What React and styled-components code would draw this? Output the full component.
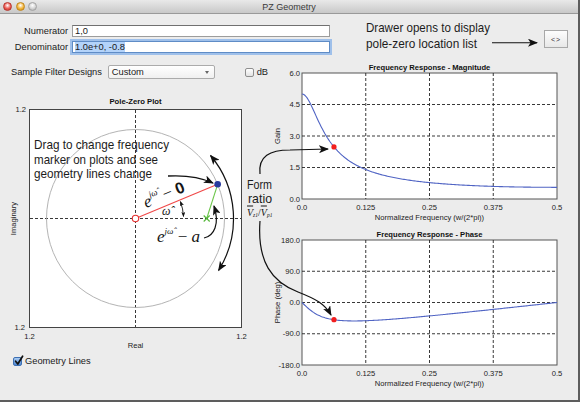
import styled, { createGlobalStyle, css } from 'styled-components';

const GlobalStyle = createGlobalStyle`
  html, body { margin: 0; padding: 0; background: #fff; }
  body { font-family: "Liberation Sans", Arial, sans-serif; }
`;

const Window = styled.div`
  position: relative;
  width: 580px;
  height: 402px;
  box-sizing: border-box;
  display: flex;
  flex-direction: column;
  overflow: hidden;
  background: #ececec;
  border-right: 2px solid #5d5d5d;
  border-bottom: 2px solid #5d5d5d;
  font-family: "Liberation Sans", Arial, sans-serif;
  font-size: 9.3px;
  color: #1a1a1a;
`;

const TitleBar = styled.div`
  flex: none;
  height: 13px;
  display: grid;
  grid-template-columns: 1fr auto 1fr;
  align-items: center;
  background: linear-gradient(#e9e9e9, #c8c8c8);
  border-bottom: 1px solid #999;
`;

const Lights = styled.div`
  display: flex;
  gap: 3.5px;
  padding-left: 3px;
`;

const Light = styled.span`
  width: 9px;
  height: 9px;
  border-radius: 50%;
  box-sizing: border-box;
  border: 1px solid ${p => p.edge};
  background: radial-gradient(circle at 50% 35%, #fff 0, ${p => p.tone} 55%, ${p => p.edge} 100%);
`;

const WindowTitle = styled.div`
  font-size: 9px;
  color: #3a3a3a;
`;

const Header = styled.div`
  flex: none;
  height: 48px;
  display: flex;
  align-items: flex-start;
`;

const FieldGrid = styled.div`
  display: grid;
  grid-template-columns: 68px 258px;
  column-gap: 4px;
  row-gap: 4px;
  align-items: center;
  padding-top: 11px;
`;

const FieldLabel = styled.span`
  text-align: right;
  line-height: 12px;
`;

const TextField = styled.div`
  height: 12px;
  box-sizing: border-box;
  padding: 0 2px;
  background: #fff;
  border: 1px solid #9c9c9c;
  border-top-color: #707070;
  line-height: 10px;
  white-space: nowrap;
  ${p => p.focused && css`
    border-color: #5f8cc6;
    box-shadow: 0 0 0 2px #9fc0ea;
  `}
`;

const Selection = styled.span`
  background: #b3d3fa;
`;

const DrawerButton = styled.div`
  margin: 16px 10px 0 auto;
  width: 24px;
  height: 18px;
  box-sizing: border-box;
  display: flex;
  align-items: center;
  justify-content: center;
  border: 1px solid #a8a8a8;
  background: linear-gradient(#fdfdfd, #e8e8e8);
  font-size: 7px;
  letter-spacing: 1px;
  color: #333;
`;

const Main = styled.div`
  flex: 1;
  display: flex;
`;

const LeftColumn = styled.div`
  width: 268px;
  display: flex;
  flex-direction: column;
`;

const RightColumn = styled.div`
  width: 310px;
  display: flex;
  flex-direction: column;
`;

const ControlRow = styled.div`
  height: ${p => p.h}px;
  display: flex;
  align-items: center;
  padding-left: ${p => p.indent}px;
`;

const FilterLabel = styled.span`
  width: 97px;
`;

const Select = styled.div`
  width: 107px;
  height: 14px;
  box-sizing: border-box;
  display: flex;
  align-items: center;
  justify-content: space-between;
  padding: 0 5px 0 3px;
  border: 1px solid #ababab;
  border-radius: 2px;
  background: linear-gradient(#fff, #f0f0f0);
`;

const Caret = styled.span`
  width: 0;
  height: 0;
  border-left: 2.5px solid transparent;
  border-right: 2.5px solid transparent;
  border-top: 3px solid #666;
`;

const Box = styled.span`
  position: relative;
  flex: none;
  width: 9px;
  height: 9px;
  box-sizing: border-box;
  margin-left: ${p => p.gap || 0}px;
  margin-right: 3px;
  border-radius: 2px;
  border: 1px solid ${p => (p.checked ? '#3d6fb2' : '#8e8e8e')};
  background: ${p => (p.checked ? 'linear-gradient(#a9cbf2, #4d86d2)' : 'linear-gradient(#fff, #e2e2e2)')};
`;

const Tick = styled.svg`
  position: absolute;
  left: 0;
  top: -3px;
  overflow: visible;
`;

const Chart = styled.svg`
  display: block;
  flex: none;
  font-family: "Liberation Sans", Arial, sans-serif;
`;

const Overlay = styled.svg`
  position: absolute;
  left: 0;
  top: 0;
  pointer-events: none;
`;

const Callout = styled.text`
  font-family: "Liberation Sans Narrow", "Liberation Sans", Arial, sans-serif;
  font-size: ${p => p.size || 13.5}px;
  fill: #1c1c1c;
`;

const MathText = styled.text`
  font-family: "Liberation Serif", "DejaVu Serif", serif;
  font-style: italic;
  font-size: ${p => p.size || 17}px;
  fill: #151515;
`;

const PLOT_L = 302;
const PLOT_R = 557;
const MARK_F = 0.0627;
const freqX = f => PLOT_L + ((PLOT_R - PLOT_L) * f) / 0.5;

function response(f) {
  const w = 2 * Math.PI * f;
  const re = 1 - 0.8 * Math.cos(w);
  const im = 0.8 * Math.sin(w);
  return { mag: 1 / Math.hypot(re, im), phase: (-Math.atan2(im, re) * 180) / Math.PI };
}

const X_TICKS = [['0.0', 0], ['0.125', 0.125], ['0.25', 0.25], ['0.375', 0.375], ['0.5', 0.5]];

function ResponsePlot({ box, title, yLabel, top, bottom, min, max, ticks, pick }) {
  const yOf = v => bottom - ((v - min) / (max - min)) * (bottom - top);
  const pts = [];
  for (let i = 0; i <= 200; i++) {
    const f = (i * 0.5) / 200;
    pts.push(`${freqX(f).toFixed(2)},${yOf(pick(response(f))).toFixed(2)}`);
  }
  const mid = (top + bottom) / 2;
  return (
    <Chart width={box[2]} height={box[3]} viewBox={box.join(' ')}>
      <text x={429.5} y={top - 3} fontSize="7.6" fontWeight="bold" textAnchor="middle" fill="#111">{title}</text>
      <rect x={PLOT_L} y={top} width={PLOT_R - PLOT_L} height={bottom - top} fill="#fff" stroke="#555" />
      <g stroke="#222" strokeWidth="0.9" strokeDasharray="3 2">
        {[0.125, 0.25, 0.375].map(f => (
          <line key={f} x1={freqX(f)} x2={freqX(f)} y1={top} y2={bottom} />
        ))}
        {ticks.slice(1, -1).map(t => (
          <line key={t} x1={PLOT_L} x2={PLOT_R} y1={yOf(t)} y2={yOf(t)} />
        ))}
      </g>
      <polyline points={pts.join(' ')} fill="none" stroke="#5064c4" strokeWidth="1.1" />
      <circle cx={freqX(MARK_F)} cy={yOf(pick(response(MARK_F)))} r="2.6" fill="#f21e1e" />
      <g fontSize="7.6" fill="#222">
        {ticks.map(t => (
          <text key={t} x={300} y={yOf(t) + 2.7} textAnchor="end">{t.toFixed(1)}</text>
        ))}
        {X_TICKS.map(([label, f]) => (
          <text key={label} x={freqX(f)} y={bottom + 11} textAnchor="middle">{label}</text>
        ))}
        <text x={429.5} y={bottom + 20.5} textAnchor="middle">Normalized Frequency (w/(2*pi))</text>
        <text transform={`translate(280 ${mid}) rotate(-90)`} textAnchor="middle">{yLabel}</text>
      </g>
    </Chart>
  );
}

const CX = 135.5;
const CY = 218.5;
const R = 89;
const W = (22.6 * Math.PI) / 180;
const DOT = [CX + R * Math.cos(W), CY - R * Math.sin(W)];
const ZX = CX + 0.8 * R;

function PoleZeroPlot() {
  return (
    <Chart width={268} height={270} viewBox="0 82 268 270">
      <text x={CX} y={104} fontSize="7.7" fontWeight="bold" textAnchor="middle" fill="#111">Pole-Zero Plot</text>
      <rect x={29.5} y={109.5} width={212} height={218} fill="#fff" stroke="#444" />
      <g stroke="#222" strokeWidth="0.9" strokeDasharray="3 2">
        <line x1={30} x2={241} y1={CY} y2={CY} />
        <line x1={CX} x2={CX} y1={110} y2={327} />
      </g>
      <circle cx={CX} cy={CY} r={R} fill="none" stroke="#b4b4b4" />
      <line x1={CX} y1={CY} x2={DOT[0]} y2={DOT[1]} stroke="#f04848" strokeWidth="1.1" />
      <line x1={ZX} y1={CY} x2={DOT[0]} y2={DOT[1]} stroke="#6cc64a" strokeWidth="1.1" />
      <circle cx={CX} cy={CY} r="3.2" fill="#fff" stroke="#e53030" strokeWidth="1.1" />
      <path d={`M${ZX - 3} ${CY - 3} L${ZX + 3} ${CY + 3} M${ZX - 3} ${CY + 3} L${ZX + 3} ${CY - 3}`} stroke="#55b83a" strokeWidth="1.1" />
      <circle cx={DOT[0]} cy={DOT[1]} r="3.3" fill="#27399e" />
      <g fontSize="7.6" fill="#222">
        <text x={26} y={112} textAnchor="end">1.2</text>
        <text x={25} y={330} textAnchor="end">1.2</text>
        <text x={29.5} y={339} textAnchor="middle">1.2</text>
        <text x={241.5} y={339} textAnchor="middle">1.2</text>
        <text x={CX} y={348} textAnchor="middle">Real</text>
        <text transform={`translate(16 ${CY}) rotate(-90)`} textAnchor="middle">Imaginary</text>
      </g>
    </Chart>
  );
}

function Annotations() {
  const arc = r => {
    const a0 = (-32 * Math.PI) / 180;
    const a1 = (40 * Math.PI) / 180;
    return `M${CX + r * Math.cos(a0)} ${CY - r * Math.sin(a0)} A${r} ${r} 0 0 0 ${CX + r * Math.cos(a1)} ${CY - r * Math.sin(a1)}`;
  };
  const small = `M${CX + 48} ${CY - 2} A48 48 0 0 0 ${CX + 48 * Math.cos(0.36)} ${CY - 48 * Math.sin(0.36)}`;
  return (
    <Overlay width={580} height={402} viewBox="0 0 580 402">
      <defs>
        <marker id="barb" viewBox="0 0 10 8" refX="9" refY="4" markerWidth="10" markerHeight="8" markerUnits="userSpaceOnUse" orient="auto-start-reverse">
          <path d="M0 0 L10 4 L0 8 L2.5 4 Z" fill="#111" />
        </marker>
        <marker id="barbSmall" viewBox="0 0 10 8" refX="9" refY="4" markerWidth="5" markerHeight="4" markerUnits="userSpaceOnUse" orient="auto-start-reverse">
          <path d="M0 0 L10 4 L0 8 L2.5 4 Z" fill="#111" />
        </marker>
      </defs>

      <Callout x={366} y={32.3} textLength="124" lengthAdjust="spacingAndGlyphs">Drawer opens to display</Callout>
      <Callout x={366} y={48.3} textLength="111" lengthAdjust="spacingAndGlyphs">pole-zero location list</Callout>
      <path d="M492 42.7 H537" stroke="#111" strokeWidth="1.1" markerEnd="url(#barb)" />

      <Callout x={34} y={149} textLength="135" lengthAdjust="spacingAndGlyphs">Drag to change frequency</Callout>
      <Callout x={34} y={163.5} textLength="124" lengthAdjust="spacingAndGlyphs">marker on plots and see</Callout>
      <Callout x={34} y={178} textLength="118" lengthAdjust="spacingAndGlyphs">geometry lines change</Callout>
      <path d="M168 176 C186 175 200 177 213 183" fill="none" stroke="#111" strokeWidth="1.3" markerEnd="url(#barb)" />

      <path d={arc(98)} fill="none" stroke="#111" strokeWidth="1.2" markerStart="url(#barb)" markerEnd="url(#barb)" />
      <path d={small} fill="none" stroke="#111" strokeWidth="0.9" markerStart="url(#barbSmall)" markerEnd="url(#barbSmall)" />

      <MathText transform="translate(146 208) rotate(-22.6)">
        e<tspan fontSize="9" dy="-8">j{'\u03C9\u0302'}</tspan>
        <tspan dy="8" fontStyle="normal"> − </tspan>
        <tspan fontStyle="normal" fontWeight="bold" fontFamily="Liberation Sans, Arial, sans-serif" fontSize="16">0</tspan>
      </MathText>
      <MathText x={162} y={215} size={12}>{'\u03C9\u0302'}</MathText>
      <MathText x={157} y={242}>
        e<tspan fontSize="9" dy="-8">j{'\u03C9\u0302'}</tspan>
        <tspan dy="8" fontStyle="normal"> − </tspan>a
      </MathText>
      <path d="M204 238 C214 236 220 224 214 206" fill="none" stroke="#111" strokeWidth="1.2" markerEnd="url(#barb)" />

      <Callout x={247} y={189} size={13} textLength="25" lengthAdjust="spacingAndGlyphs">Form</Callout>
      <Callout x={248} y={203} size={13} textLength="24" lengthAdjust="spacingAndGlyphs">ratio</Callout>
      <MathText x={247} y={215.5} size={10}>
        <tspan textDecoration="overline">V</tspan>
        <tspan fontSize="5.5" dy="1.3">z1</tspan>
        <tspan dy="-1.3" fontStyle="normal">/</tspan>
        <tspan textDecoration="overline">V</tspan>
        <tspan fontSize="5.5" dy="1.3">p1</tspan>
      </MathText>
      <path d="M260 174 C258 156 270 150 290 150 L328 149" fill="none" stroke="#111" strokeWidth="1.2" markerEnd="url(#barb)" />
      <path d="M260 221 C257 262 272 282 298 292 C316 299 325 304 331 315" fill="none" stroke="#111" strokeWidth="1.2" markerEnd="url(#barb)" />
    </Overlay>
  );
}

function CheckMark() {
  return (
    <Tick width="10" height="11" viewBox="0 0 10 11">
      <path d="M1.6 6.2 L3.8 9 L8.6 1.2" fill="none" stroke="#111" strokeWidth="1.7" strokeLinecap="round" strokeLinejoin="round" />
    </Tick>
  );
}

export default function App() {
  return (
    <>
      <GlobalStyle />
      <Window>
        <TitleBar>
          <Lights>
            <Light tone="#ec5a52" edge="#b8342c" />
            <Light tone="#f2b53a" edge="#c2861c" />
            <Light tone="#d4d4d4" edge="#a3a3a3" />
          </Lights>
          <WindowTitle>PZ Geometry</WindowTitle>
          <span />
        </TitleBar>

        <Header>
          <FieldGrid>
            <FieldLabel>Numerator</FieldLabel>
            <TextField>1,0</TextField>
            <FieldLabel>Denominator</FieldLabel>
            <TextField focused><Selection>1.0e+0, -0.8</Selection></TextField>
          </FieldGrid>
          <DrawerButton>{'<>'}</DrawerButton>
        </Header>

        <Main>
          <LeftColumn>
            <ControlRow h={20} indent={11}>
              <FilterLabel>Sample Filter Designs</FilterLabel>
              <Select>
                <span>Custom</span>
                <Caret />
              </Select>
              <Box gap={30} />
              <span>dB</span>
            </ControlRow>
            <PoleZeroPlot />
            <ControlRow h={18} indent={13}>
              <Box checked><CheckMark /></Box>
              <span>Geometry Lines</span>
            </ControlRow>
          </LeftColumn>

          <RightColumn>
            <ResponsePlot
              box={[268, 62, 310, 162]}
              title="Frequency Response - Magnitude"
              yLabel="Gain"
              top={73}
              bottom={199}
              min={0}
              max={6}
              ticks={[0, 1.5, 3, 4.5, 6]}
              pick={r => r.mag}
            />
            <ResponsePlot
              box={[268, 224, 310, 166]}
              title="Frequency Response - Phase"
              yLabel="Phase (deg)"
              top={240}
              bottom={365}
              min={-180}
              max={180}
              ticks={[-180, -90, 0, 90, 180]}
              pick={r => r.phase}
            />
          </RightColumn>
        </Main>

        <Annotations />
      </Window>
    </>
  );
}
